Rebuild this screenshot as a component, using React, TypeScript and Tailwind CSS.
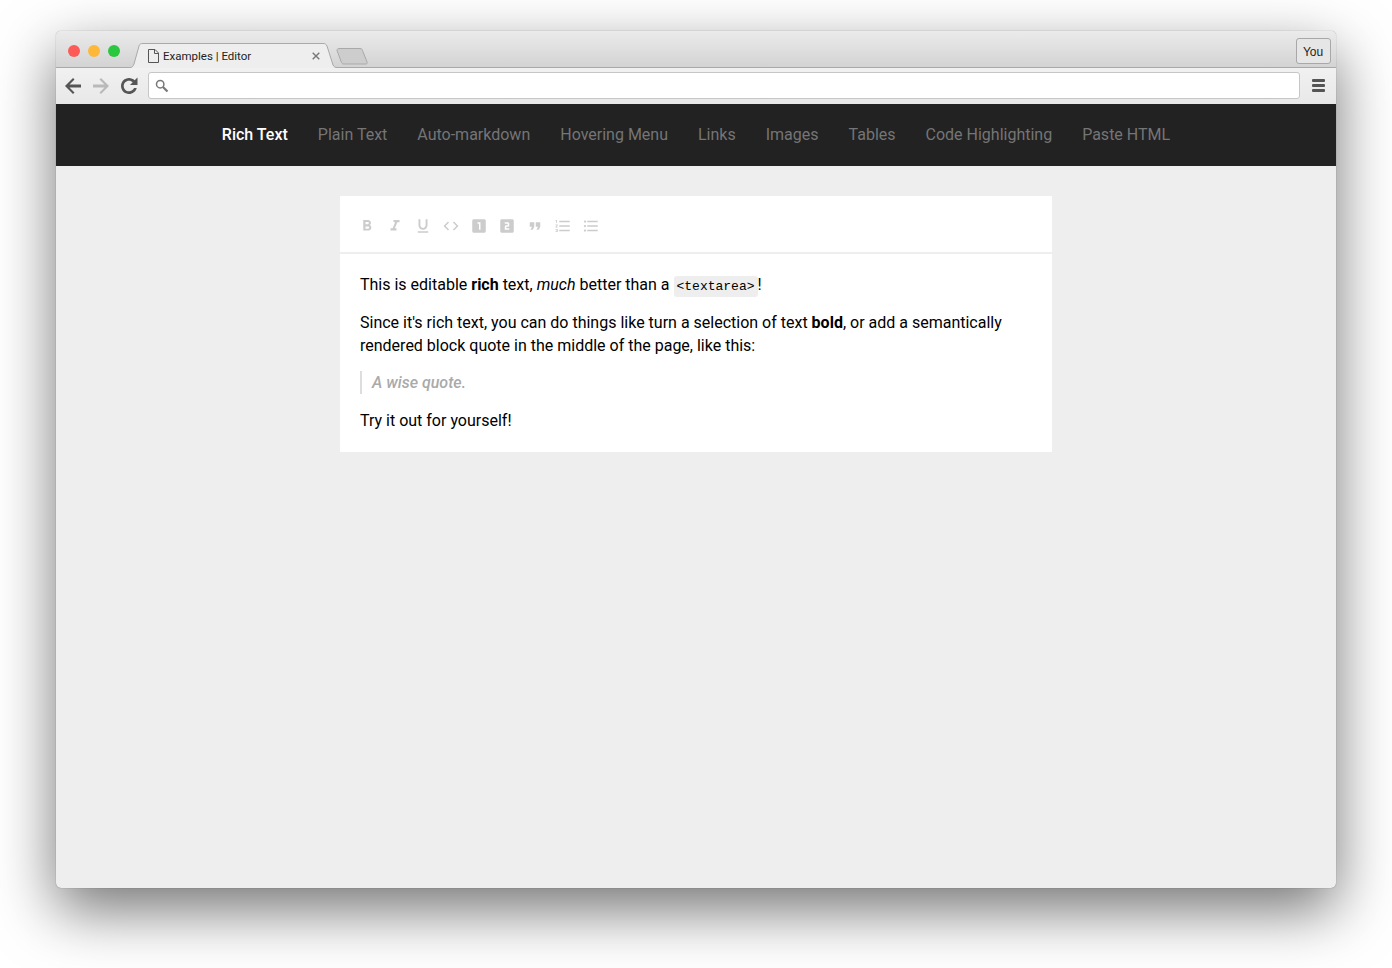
const links = ["Plain Text", "Auto-markdown", "Hovering Menu", "Links", "Images", "Tables", "Code Highlighting", "Paste HTML"];

const toolbarIcons = [
  "M15.6 10.79c.97-.67 1.65-1.77 1.65-2.79 0-2.26-1.75-4-4-4H7v14h7.04c2.09 0 3.71-1.7 3.71-3.79 0-1.52-.86-2.82-2.15-3.42zM10 6.5h3c.83 0 1.5.67 1.5 1.5s-.67 1.5-1.5 1.5h-3v-3zm3.5 9H10v-3h3.5c.83 0 1.5.67 1.5 1.5s-.67 1.5-1.5 1.5z",
  "M10 4v3h2.21l-3.42 8H6v3h8v-3h-2.21l3.42-8H18V4z",
  "M12 17c3.31 0 6-2.69 6-6V3h-2.5v8c0 1.93-1.57 3.5-3.5 3.5S8.5 12.93 8.5 11V3H6v8c0 3.31 2.69 6 6 6zm-7 2v2h14v-2H5z",
  "M9.4 16.6L4.8 12l4.6-4.6L8 6l-6 6 6 6 1.4-1.4zm5.2 0l4.6-4.6-4.6-4.6L16 6l6 6-6 6-1.4-1.4z",
  "M19 3H5c-1.1 0-2 .9-2 2v14c0 1.1.9 2 2 2h14c1.1 0 2-.9 2-2V5c0-1.1-.9-2-2-2zm-5 14h-2V9h-2V7h4v10z",
  "M19 3H5c-1.1 0-2 .9-2 2v14c0 1.1.9 2 2 2h14c1.1 0 2-.9 2-2V5c0-1.1-.9-2-2-2zm-4 8c0 1.1-.9 2-2 2h-2v2h4v2H9v-4c0-1.11.9-2 2-2h2V9H9V7h4c1.1 0 2 .89 2 2v2z",
  "M6 17h3l2-4V7H5v6h3zm8 0h3l2-4V7h-6v6h3z",
  "M2 17h2v.5H3v1h1v.5H2v1h3v-4H2v1zm1-9h1V4H2v1h1v3zm-1 3h1.8L2 13.1v.9h3v-1H3.2L5 10.9V10H2v1zm5-6v2h14V5H7zm0 14h14v-2H7v2zm0-6h14v-2H7v2z",
  "M4 10.5c-.83 0-1.5.67-1.5 1.5s.67 1.5 1.5 1.5 1.5-.67 1.5-1.5-.67-1.5-1.5-1.5zm0-6c-.83 0-1.5.67-1.5 1.5S3.17 7.5 4 7.5 5.5 6.83 5.5 6 4.83 4.5 4 4.5zm0 12c-.83 0-1.5.68-1.5 1.5s.68 1.5 1.5 1.5 1.5-.68 1.5-1.5-.67-1.5-1.5-1.5zM7 19h14v-2H7v2zm0-6h14v-2H7v2zm0-8v2h14V5H7z",
];

function TabStrip() {
  return (
    <div className="flex h-[37px] items-start rounded-t-[5px] border-b border-[#a9a9a9] bg-gradient-to-b from-[#ebebeb] to-[#d3d3d3]">
      {/* traffic lights */}
      <div className="mt-[14px] ml-[12px] flex gap-2">
        <div className="h-3 w-3 rounded-full bg-[#fc5b57]" />
        <div className="h-3 w-3 rounded-full bg-[#fdb83a]" />
        <div className="h-3 w-3 rounded-full bg-[#2ac73f]" />
      </div>

      {/* active tab */}
      <div className="relative mt-3 ml-[10px] flex h-[25px] w-[208px] items-center pr-[18px] pl-[18px]">
        <svg className="absolute inset-0" width="208" height="25" viewBox="0 0 208 25">
          <path
            d="M0 24.5C2 24.5 3 23.5 4 21L9 3C9.5 1 11 .5 13 .5L193 .5C195 .5 196 1 197 3L203 22C204 24 205 24.5 208 24.5L208 25L0 25Z"
            fill="#eeeeee"
          />
          <path
            d="M0 24.5C2 24.5 3 23.5 4 21L9 3C9.5 1 11 .5 13 .5L193 .5C195 .5 196 1 197 3L203 22C204 24 205 24.5 208 24.5"
            fill="none"
            stroke="#a9a9a9"
          />
        </svg>
        <svg className="relative" width="11" height="14" viewBox="0 0 11 14" fill="none" stroke="#555" strokeWidth="1">
          <path d="M.5.5H7L10.5 4V13.5H.5Z" />
          <path d="M6.5.5V4.5H10.5" />
        </svg>
        <span className="relative ml-[4px] flex-1 pt-[2px] font-['Roboto',sans-serif] text-[11.5px] leading-none text-[#222]">Examples | Editor</span>
        <svg className="relative" width="8" height="8" viewBox="0 0 8 8" stroke="#777" strokeWidth="1.4">
          <path d="M.7.7L7.3 7.3M7.3.7L.7 7.3" />
        </svg>
      </div>

      {/* new tab */}
      <svg className="mt-[17px] -ml-[2px]" width="32" height="17" viewBox="0 0 32 17">
        <path d="M1 2.5C1 1.500 1.500 .5 3 .5L24 .5C25.500 .5 26 1 26.500 2.500L31 14C31.500 15.500 31 16 29.500 16L8 16C6.500 16 6 15.500 5.500 14.500Z" fill="#cdcdcd" stroke="#a9a9a9" />
      </svg>

      <div className="flex-1" />
      <div className="mt-[7px] mr-[5px] flex h-[26px] w-[35px] items-center justify-center rounded-[3px] border border-[#a8a8a8] bg-[#e6e6e6] pt-[1px] pr-[1px] font-['Liberation_Sans',sans-serif] text-[12px] text-[#222]">
        You
      </div>
    </div>
  );
}

function AddressBar() {
  return (
    <div className="flex h-9 items-center bg-gradient-to-b from-[#f1f1f1] to-[#e8e8e8] pr-[11px] pb-[1px] pl-2">
      <div className="flex gap-[10px]">
        <svg width="18" height="18" viewBox="3 3 18 18" fill="#555">
          <path d="M20 10.500H8.500L13.500 5.500L12 4L4 12L12 20L13.500 18.500L8.500 13.500H20Z" />
        </svg>
        <svg width="18" height="18" viewBox="3 3 18 18" fill="#b9b9b9">
          <path d="M4 10.500H15.500L10.500 5.500L12 4L20 12L12 20L10.500 18.500L15.500 13.500H4Z" />
        </svg>
        <svg width="18" height="18" viewBox="3 3 18 18" fill="#555">
          <path d="M17.650 6.350C16.200 4.900 14.210 4 12 4c-4.420 0-7.990 3.580-7.990 8s3.570 8 7.990 8c3.730 0 6.840-2.550 7.730-6h-2.680c-.82 1.900-2.740 3.300-5.050 3.300-2.930 0-5.300-2.370-5.300-5.300s2.370-5.300 5.300-5.300c1.470 0 2.760.6 3.720 1.580L13 11h7.500V3.500l-2.850 2.850z" />
        </svg>
      </div>
      <div className="ml-[10px] flex h-[27px] flex-1 items-center rounded-[3px] border border-[#c6c6c6] bg-white pl-[6px]">
        <svg width="14" height="14" viewBox="0 0 14 14" fill="none" stroke="#777">
          <circle cx="5.200" cy="5.200" r="3.700" strokeWidth="1.500" />
          <path d="M8 8L12.500 12.500" strokeWidth="2.200" />
        </svg>
      </div>
      <div className="ml-3 flex w-[13px] flex-col gap-[2px]">
        <div className="h-[3px] rounded-[1px] bg-[#555]" />
        <div className="h-[3px] rounded-[1px] bg-[#555]" />
        <div className="h-[3px] rounded-[1px] bg-[#555]" />
      </div>
    </div>
  );
}

function Editor() {
  return (
    <div className="mx-auto mt-[30px] w-[712px] bg-white font-['Roboto',sans-serif] text-[16px] leading-[23px] text-black">
      <div className="flex h-[58px] items-center gap-[10px] border-b-2 border-[#eeeeee] pt-[4px] pl-[18px]">
        {toolbarIcons.map((d) => (
          <svg key={d} width="18" height="18" viewBox="0 0 24 24" fill="#cccccc">
            <path d={d} />
          </svg>
        ))}
      </div>
      <div className="flex flex-col gap-[14.6px] px-5 pt-[19px] pb-[20.2px]">
        <p>
          This is editable <strong className="font-bold">rich</strong> text, <em>much</em> better than a{" "}
          <code className="rounded-[3px] bg-[#eeeeee] p-[3px] font-['Liberation_Mono',monospace] text-[13px] leading-[1.4]">&lt;textarea&gt;</code>!
        </p>
        <p>
          Since it's rich text, you can do things like turn a selection of text <strong className="font-bold">bold</strong>, or add a semantically rendered block quote in the middle of the page, like this:
        </p>
        <blockquote className="border-l-2 border-[#dddddd] pl-[10px] font-medium text-[#aaaaaa] italic">A wise quote.</blockquote>
        <p>Try it out for yourself!</p>
      </div>
    </div>
  );
}

export default function App() {
  return (
    <div className="h-[968px] overflow-hidden bg-white pt-[31px]">
      <div className="mx-auto flex h-[857px] w-[1280px] flex-col rounded-[5px] bg-[#eeeeee] shadow-[0_22px_60px_0_rgba(0,0,0,0.55),0_0_1px_rgba(0,0,0,0.5)]">
        <TabStrip />
        <AddressBar />
        <nav className="flex h-[62px] items-center justify-center gap-[30px] bg-[#222222] font-['Roboto',sans-serif] text-[16px]">
          <span className="font-medium text-white">Rich Text</span>
          {links.map((l) => (
            <span key={l} className="text-[#757575]">{l}</span>
          ))}
        </nav>
        <Editor />
      </div>
    </div>
  );
}
